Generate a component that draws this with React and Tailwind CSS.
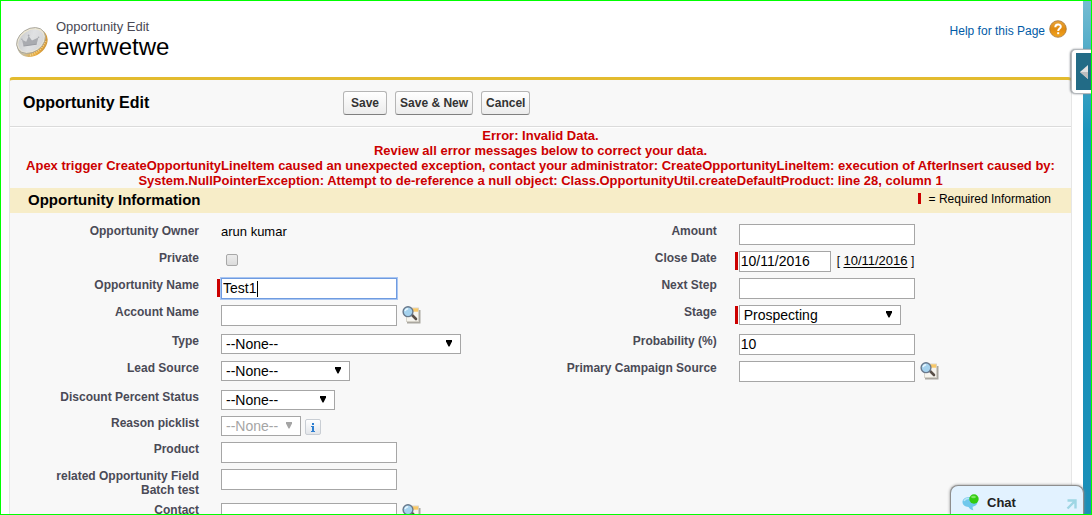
import React from "react";

const CONTROL = "box-border rounded-none border bg-white text-[14px] text-black outline-none";

function CoinIcon() {
  return (
    <svg width="34" height="32" viewBox="0 0 34 32" aria-hidden="true">
      <defs>
        <linearGradient id="rim" x1="0" y1="0" x2="1" y2="1">
          <stop offset="0" stopColor="#8f8f8f" />
          <stop offset="0.35" stopColor="#c9bf9f" />
          <stop offset="0.65" stopColor="#e9ab3c" />
          <stop offset="1" stopColor="#b9853a" />
        </linearGradient>
        <linearGradient id="face" x1="0" y1="0" x2="1" y2="1">
          <stop offset="0" stopColor="#c6c7c9" />
          <stop offset="0.5" stopColor="#e0e1e3" />
          <stop offset="1" stopColor="#d2d3d5" />
        </linearGradient>
      </defs>
      <ellipse cx="17.5" cy="17" rx="16.3" ry="12.6" transform="rotate(-36 17.5 17)" fill="url(#rim)" />
      <path d="M15 29c6-1 13-7 15.500-14" fill="none" stroke="#f6d48c" strokeWidth="2.400" strokeDasharray="0.900 1.400" />
      <ellipse cx="16" cy="14.500" rx="15.500" ry="11.600" transform="rotate(-34 16 14.500)" fill="#ece6d2" stroke="#a09e96" strokeWidth="0.800" />
      <ellipse cx="16" cy="14.700" rx="13.800" ry="10" transform="rotate(-34 16 14.700)" fill="url(#face)" />
      <path d="M8.500 20 7 13.700l4.200 2 2.500-5.700 3.300 4.600 6.400-3-1.800 6.800z" fill="#a9abb0" />
      <path d="M8.500 20 21.600 18.200" stroke="#9a9ca2" strokeWidth="1" />
      <circle cx="6.900" cy="13.300" r="0.800" fill="#a9abb0" />
      <circle cx="13.600" cy="9.500" r="0.900" fill="#a9abb0" />
      <circle cx="23.600" cy="11.200" r="0.800" fill="#a9abb0" />
    </svg>
  );
}

function HelpIcon() {
  return (
    <svg width="18" height="18" viewBox="0 0 18 18" aria-hidden="true">
      <defs>
        <linearGradient id="help" x1="0" y1="0" x2="0" y2="1">
          <stop offset="0" stopColor="#e9a53a" />
          <stop offset="0.5" stopColor="#e08a10" />
          <stop offset="1" stopColor="#f3a51c" />
        </linearGradient>
      </defs>
      <circle cx="9" cy="9" r="8.300" fill="url(#help)" stroke="#a8763a" strokeWidth="0.800" />
      <path d="M6.300 7.200c0-3.400 5.500-3.500 5.500-.5C11.800 8.600 9.200 8.600 9.200 11" fill="none" stroke="#fff" strokeWidth="2" />
      <rect x="8.200" y="12.200" width="2" height="2" fill="#fff" />
    </svg>
  );
}

function LookupIcon() {
  return (
    <svg width="19" height="18" viewBox="0 0 19 18" aria-hidden="true">
      <path d="M5 16.500h12.500V4" fill="none" stroke="#aaa7a0" strokeWidth="2" />
      <rect x="4.500" y="2" width="12" height="13.500" fill="#f6f4ee" stroke="#cfcbc0" strokeWidth="0.800" />
      <rect x="9" y="2.300" width="7.200" height="3.400" fill="#f8c868" />
      <path d="M9.500 8.500 14 13" stroke="#5a5048" strokeWidth="2.600" strokeLinecap="round" />
      <circle cx="6" cy="5.700" r="4.900" fill="#a5d2ee" stroke="#69798c" strokeWidth="1.400" />
      <path d="M3.200 5.200c.2-1.600 1.400-2.400 3-2.400" fill="none" stroke="#e6f6ff" strokeWidth="1.400" />
    </svg>
  );
}

function ChatIcon() {
  return (
    <svg width="18" height="17" viewBox="0 0 18 17" aria-hidden="true">
      <path d="M7.500 3C3.200 3 .5 5.200.5 8s2.400 4.700 6 5c1.200 1.800 2.600 3 5 3.200-.8-1-1-2.200-.8-3.500 3-.7 4.800-2.400 4.800-4.700C15.500 5 12 3 7.500 3z" fill="#6fc8ec" />
      <path d="M2 7c.7-1.800 2.600-2.700 5-2.800" fill="none" stroke="#b8e6f8" strokeWidth="1.400" />
      <circle cx="12" cy="5" r="4.700" fill="#33cc11" />
      <ellipse cx="11.500" cy="3" rx="2.400" ry="1.300" fill="#7be65f" />
    </svg>
  );
}

function Label({ htmlFor, children }) {
  return (
    <label htmlFor={htmlFor} className="block pt-1 text-right text-[12px] font-bold leading-[14px] text-[#4a4a56]">
      {children}
    </label>
  );
}

function Field({ required, children }) {
  return (
    <div className="relative flex items-start pt-1">
      {required && <span className="absolute -left-1 top-[5px] h-[18px] w-[3px] bg-[#c00]" />}
      {children}
    </div>
  );
}

function TextBox({ id, value = "", width = "w-44", focused = false }) {
  return (
    <div className="relative flex">
      <input
        id={id}
        type="text"
        defaultValue={value}
        className={`${CONTROL} h-[21px] px-px ${width} ${
          focused ? "border-[#6f9be0] shadow-[0_0_0_1px_#a9c6f2]" : "border-[#a6a6a6]"
        }`}
      />
      {focused && <span className="absolute left-9 top-[3px] h-4 w-px bg-black" />}
    </div>
  );
}

function Picklist({ id, value, width, disabled = false }) {
  return (
    <div className={`relative flex ${width}`}>
      <select
        id={id}
        defaultValue={value}
        disabled={disabled}
        className={`${CONTROL} h-5 w-full appearance-none border-[#a6a6a6] pl-1 leading-[18px] disabled:text-[#a5a5a5] disabled:opacity-100`}
      >
        <option>{value}</option>
      </select>
      <svg
        width="6"
        height="7"
        viewBox="0 0 6 7"
        className={`pointer-events-none absolute right-[9px] top-1.5 ${disabled ? "fill-[#a5a5a5]" : "fill-black"}`}
        aria-hidden="true"
      >
        <path d="M0 0h6v1.500L3.500 6.500h-1L0 1.500z" />
      </svg>
    </div>
  );
}

function Lookup({ id, name }) {
  return (
    <div className="flex items-start gap-[5px]">
      <TextBox id={id} />
      <button type="button" aria-label={`${name} lookup`} className="block pt-px">
        <LookupIcon />
      </button>
    </div>
  );
}

function Row({ height, left, right }) {
  return (
    <div className={`grid grid-cols-[189px_6fr_189px_7fr] gap-x-[22px] ${height}`}>
      {left}
      {right}
    </div>
  );
}

function ToolButton({ children }) {
  return (
    <button
      type="button"
      className="h-6 rounded-[3px] border border-[#b5b5b5] border-b-[#7f7f7f] bg-gradient-to-b from-white to-[#ececec] px-1 text-[12px] font-bold text-[#333] first:px-[7px]"
    >
      {children}
    </button>
  );
}

export default function App() {
  return (
    <div className="relative flex h-screen overflow-hidden border border-[#00ff00] bg-white font-['Liberation_Sans',Arial,sans-serif]">
      <main className="min-w-0 flex-1 pl-2 pr-[11px]">
        <header className="flex h-[76px] items-start justify-between pr-[5px]">
          <div className="flex items-start gap-[7px] pl-1.5 pt-[18px]">
            <div className="pt-[7px]">
              <CoinIcon />
            </div>
            <h1 className="text-[#4a4a56]">
              <span className="block text-[13px] leading-4">Opportunity Edit</span>
              <span className="block text-[24px] leading-6 text-black">ewrtwetwe</span>
            </h1>
          </div>
          <a href="#help" className="flex items-start gap-1 pt-[19px] text-[12px] leading-[22px] text-[#015ba7]">
            Help for this Page
            <HelpIcon />
          </a>
        </header>

        <form className="rounded-t-[4px] border-x border-t-[3px] border-x-[#e6e6e6] border-t-[#e3bb2e] bg-[#f8f8f8]">
          <div className="grid h-[47px] grid-cols-[189px_6fr_189px_7fr] items-center gap-x-[22px] border-b border-[#dbdbdb]">
            <h2 className="whitespace-nowrap pl-[13px] text-[16px] font-bold text-black">Opportunity Edit</h2>
            <div className="col-span-3 flex gap-2 pl-[122px]">
              <ToolButton>Save</ToolButton>
              <ToolButton>Save &amp; New</ToolButton>
              <ToolButton>Cancel</ToolButton>
            </div>
          </div>

          <div role="alert" className="border-t border-white px-2 text-center text-[13px] font-bold leading-[15px] text-[#c00]">
            <p>Error: Invalid Data.</p>
            <p>Review all error messages below to correct your data.</p>
            <p>
              Apex trigger CreateOpportunityLineItem caused an unexpected exception, contact your administrator:
              CreateOpportunityLineItem: execution of AfterInsert caused by: System.NullPointerException: Attempt to
              de-reference a null object: Class.OpportunityUtil.createDefaultProduct: line 28, column 1
            </p>
          </div>

          <div className="flex h-[25px] items-center justify-between bg-[#f7edc8] pl-[18px] pr-5">
            <h3 className="text-[15px] font-bold text-black">Opportunity Information</h3>
            <p className="flex items-center gap-2 pb-1 text-[12px] text-black">
              <span className="h-[11px] w-[3px] bg-[#c00]" />= Required Information
            </p>
          </div>

          <div className="pt-[7px]">
            <Row
              height="min-h-[27px]"
              left={
                <>
                  <span className="pt-1 text-right text-[12px] font-bold leading-[14px] text-[#4a4a56]">Opportunity Owner</span>
                  <span className="pt-1 text-[13px] leading-[15px] text-black">arun kumar</span>
                </>
              }
              right={
                <>
                  <Label htmlFor="amount">Amount</Label>
                  <Field><TextBox id="amount" /></Field>
                </>
              }
            />
            <Row
              height="min-h-[27px]"
              left={
                <>
                  <Label htmlFor="private">Private</Label>
                  <Field>
                    <input
                      id="private"
                      type="checkbox"
                      className="ml-[5px] mt-[3px] size-3 appearance-none rounded-[2px] border border-[#a8a8a8] bg-gradient-to-b from-[#ececec] to-[#dcdcdc]"
                    />
                  </Field>
                </>
              }
              right={
                <>
                  <Label htmlFor="close">Close Date</Label>
                  <Field required>
                    <TextBox id="close" value="10/11/2016" width="w-[92px]" />
                    <span className="pl-1.5 pt-0.5 text-[12px] leading-4 text-black">
                      [ <a href="#today" className="text-[13px] underline underline-offset-2">10/11/2016</a> ]
                    </span>
                  </Field>
                </>
              }
            />
            <Row
              height="min-h-[27px]"
              left={
                <>
                  <Label htmlFor="name">Opportunity Name</Label>
                  <Field required><TextBox id="name" value="Test1" focused /></Field>
                </>
              }
              right={
                <>
                  <Label htmlFor="next">Next Step</Label>
                  <Field><TextBox id="next" /></Field>
                </>
              }
            />
            <Row
              height="min-h-[29px]"
              left={
                <>
                  <Label htmlFor="account">Account Name</Label>
                  <Field><Lookup id="account" name="Account Name" /></Field>
                </>
              }
              right={
                <>
                  <Label htmlFor="stage">Stage</Label>
                  <Field required><Picklist id="stage" value="Prospecting" width="w-[162px]" /></Field>
                </>
              }
            />
            <Row
              height="min-h-[27px]"
              left={
                <>
                  <Label htmlFor="type">Type</Label>
                  <Field><Picklist id="type" value="--None--" width="w-60" /></Field>
                </>
              }
              right={
                <>
                  <Label htmlFor="probability">Probability (%)</Label>
                  <Field><TextBox id="probability" value="10" /></Field>
                </>
              }
            />
            <Row
              height="min-h-[29px]"
              left={
                <>
                  <Label htmlFor="lead">Lead Source</Label>
                  <Field><Picklist id="lead" value="--None--" width="w-[129px]" /></Field>
                </>
              }
              right={
                <>
                  <Label htmlFor="campaign">Primary Campaign Source</Label>
                  <Field><Lookup id="campaign" name="Primary Campaign Source" /></Field>
                </>
              }
            />
            <Row
              height="min-h-[26px]"
              left={
                <>
                  <Label htmlFor="discount">Discount Percent Status</Label>
                  <Field><Picklist id="discount" value="--None--" width="w-[114px]" /></Field>
                </>
              }
            />
            <Row
              height="min-h-[26px]"
              left={
                <>
                  <Label htmlFor="reason">Reason picklist</Label>
                  <Field>
                    <Picklist id="reason" value="--None--" width="w-20" disabled />
                    <button
                      type="button"
                      aria-label="Reason picklist information"
                      className="ml-1 mt-[3px] flex size-4 items-center justify-center rounded-[2px] border border-[#c9ced4] bg-gradient-to-b from-white to-[#e3e6ea]"
                    >
                      <svg width="6" height="9" viewBox="0 0 6 9" fill="#2f7fd0" aria-hidden="true">
                        <path d="M2 0h2v2H2zM1 3h3v5h1v1H1V8h1V4H1z" />
                      </svg>
                    </button>
                  </Field>
                </>
              }
            />
            <Row
              height="min-h-[27px]"
              left={
                <>
                  <Label htmlFor="product">Product</Label>
                  <Field><TextBox id="product" /></Field>
                </>
              }
            />
            <Row
              height="min-h-[34px]"
              left={
                <>
                  <Label htmlFor="related">
                    related Opportunity Field
                    <br />
                    Batch test
                  </Label>
                  <Field><TextBox id="related" /></Field>
                </>
              }
            />
            <Row
              height="min-h-[27px]"
              left={
                <>
                  <Label htmlFor="contact">Contact</Label>
                  <Field><Lookup id="contact" name="Contact" /></Field>
                </>
              }
            />
          </div>
        </form>
      </main>

      <div className="w-2 bg-[linear-gradient(#74bcd2,#4aa8c6_60px,#1a94bc_130px,#1a8fb8)]" />

      <button
        type="button"
        aria-label="Open sidebar"
        className="absolute right-0 top-12 flex h-[45px] w-5 items-center rounded-l-[5px] border border-r-0 border-[#b4b8bc] bg-white pl-1 shadow-[-1px_0_2px_#8a8f94]"
      >
        <span className="flex h-[37px] w-full items-center justify-end bg-[#226b86] pr-[3px]">
          <svg width="8" height="14" viewBox="0 0 8 14" aria-hidden="true">
            <path d="M8 0v14L0 7z" fill="#e2e2e2" />
            <path d="M8 7v7L0 7z" fill="#bdbdbd" />
          </svg>
        </span>
      </button>

      <button
        type="button"
        className="absolute bottom-0 right-[7px] flex h-[29px] w-[134px] items-center rounded-t-[8px] border border-b-0 border-[#8e8e8e] bg-[#e2f2ff] pl-[11px] pr-1.5 pt-[5px] shadow-[0_0_3px_#888]"
      >
        <ChatIcon />
        <span className="pl-[7px] text-[13px] font-bold text-[#222]">Chat</span>
        <svg width="11" height="11" viewBox="0 0 11 11" className="ml-auto mt-1" aria-hidden="true">
          <path d="M1.500 1.500h8v8M9 2 1.500 9.500" fill="none" stroke="#9fd6e4" strokeWidth="2.400" />
        </svg>
      </button>
    </div>
  );
}
